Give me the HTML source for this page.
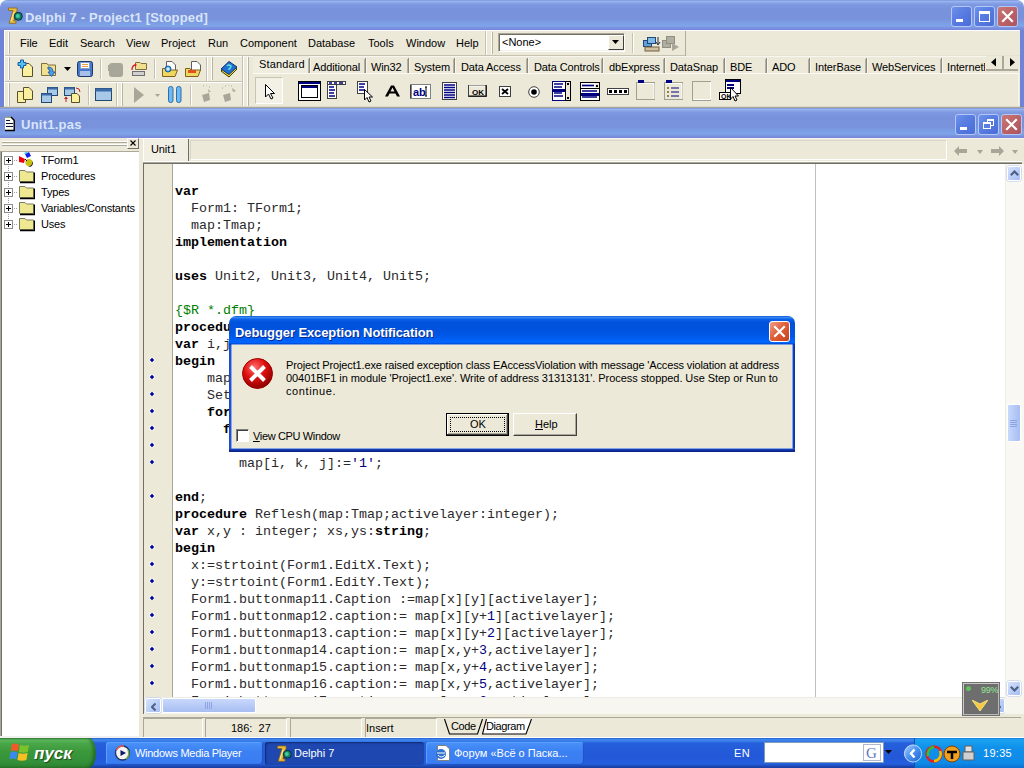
<!DOCTYPE html><html><head><meta charset="utf-8"><style>
*{box-sizing:border-box}
body{margin:0;width:1024px;height:768px;overflow:hidden;position:relative;background:#ECE9D8;font-family:"Liberation Sans",sans-serif;font-size:11px;color:#000}
.a{position:absolute}
.t{position:absolute;white-space:pre;line-height:13px}
.code{position:absolute;white-space:pre;font-family:"Liberation Mono",monospace;font-size:13.33px;line-height:17px;color:#2A2A2A}
.code b{font-weight:bold;color:#000}
.n{color:#000080}
.g{color:#008000}
</style></head><body>
<div style="position:absolute;left:0px;top:0px;width:1024px;height:8px;background:#fff"></div>
<div style="position:absolute;left:0px;top:0px;width:1024px;height:30px;background:linear-gradient(to bottom,#6F8ACB 0px,#9CB6F3 1px,#95B0EF 2px,#86A2E6 3px,#7D98E0 5px,#7893DC 9px,#7893DC 19px,#7B9BE3 22px,#7EA5E8 26px,#7B90DF 28px,#7684DA 30px);border-radius:7px 7px 0 0"></div>
<div style="position:absolute;left:0px;top:30px;width:4px;height:78px;background:#6F84D8"></div>
<div style="position:absolute;left:1020px;top:30px;width:4px;height:78px;background:#6F84D8"></div>
<div style="position:absolute;left:25px;top:10px;white-space:pre;font-weight:bold;font-size:13px;line-height:16px;color:#D8E4F8;letter-spacing:0.18px">Delphi 7 - Project1 [Stopped]</div>
<div style="position:absolute;left:951px;top:6px;width:21px;height:21px;border:1px solid #B4C8F8;border-radius:3px;background:linear-gradient(135deg,#6E92EA 0%,#5A7EE2 40%,#4A6CD8 100%);"><div class="a" style="left:4px;top:12px;width:7px;height:3px;background:#fff"></div></div>
<div style="position:absolute;left:974px;top:6px;width:21px;height:21px;border:1px solid #B4C8F8;border-radius:3px;background:linear-gradient(135deg,#6E92EA 0%,#5A7EE2 40%,#4A6CD8 100%);"><div class="a" style="left:4px;top:4px;width:11px;height:11px;border:1px solid #fff;border-top-width:3px"></div></div>
<div style="position:absolute;left:997px;top:6px;width:21px;height:21px;border:1px solid #B4C8F8;border-radius:3px;background:linear-gradient(135deg,#C87878 0%,#BC6266 50%,#AC5460 100%);"><svg class="a" style="left:0;top:0" width="19" height="19" viewBox="0 0 19 19"><path d="M5 5 L14 14 M14 5 L5 14" stroke="#fff" stroke-width="2.2" stroke-linecap="square"/></svg></div>
<svg class="a" style="left:8px;top:7px" width="16" height="17" viewBox="0 0 16 17"><path d="M0.5 1 H9 V3.5 L5.8 14 H8 V16.3 H1.2 L5 3.5 H0.5 Z" fill="#E8C040" stroke="#906010" stroke-width="0.8"/><path d="M3 14 L6 5" stroke="#F8E8A0" stroke-width="1"/><circle cx="10.3" cy="9.3" r="4" fill="#148060" stroke="#0A2850" stroke-width="1"/><circle cx="9.8" cy="9" r="2" fill="#40C8A0"/></svg>
<div style="position:absolute;left:4px;top:30px;width:1016px;height:77px;background:#ECE9D8"></div>
<div style="position:absolute;left:4px;top:30px;width:1016px;height:1px;background:#FFFFFF"></div>
<div style="position:absolute;left:4px;top:55px;width:239px;height:1px;background:#C5C2B2"></div>
<div style="position:absolute;left:4px;top:56px;width:239px;height:1px;background:#FFFFFF"></div>
<div style="position:absolute;left:4px;top:81px;width:239px;height:1px;background:#C5C2B2"></div>
<div style="position:absolute;left:4px;top:82px;width:239px;height:1px;background:#FFFFFF"></div>
<div style="position:absolute;left:4px;top:106px;width:1016px;height:1px;background:#DCD9CC"></div>
<div style="position:absolute;left:243px;top:55px;width:443px;height:1px;background:#C5C2B2"></div>
<div style="position:absolute;left:686px;top:55px;width:334px;height:1px;background:#E6E3D4"></div>
<div style="position:absolute;left:243px;top:56px;width:777px;height:1px;background:#F7F6F0"></div>
<div style="position:absolute;left:242px;top:56px;width:1px;height:50px;background:#C5C2B2"></div><div style="position:absolute;left:243px;top:56px;width:1px;height:50px;background:#FFFFFF"></div>
<div style="position:absolute;left:206px;top:57px;width:1px;height:24px;background:#C5C2B2"></div><div style="position:absolute;left:207px;top:57px;width:1px;height:24px;background:#FFFFFF"></div>
<div style="position:absolute;left:116px;top:83px;width:1px;height:23px;background:#C5C2B2"></div><div style="position:absolute;left:117px;top:83px;width:1px;height:23px;background:#FFFFFF"></div>
<div style="position:absolute;left:485px;top:31px;width:1px;height:24px;background:#C5C2B2"></div><div style="position:absolute;left:486px;top:31px;width:1px;height:24px;background:#FFFFFF"></div>
<div style="position:absolute;left:685px;top:31px;width:1px;height:25px;background:#B0AD9E"></div>
<div style="position:absolute;left:8px;top:32px;width:1px;height:22px;background:#FFFFFF"></div><div style="position:absolute;left:9px;top:32px;width:1px;height:22px;background:#B8B4A2"></div>
<div style="position:absolute;left:8px;top:57px;width:1px;height:23px;background:#FFFFFF"></div><div style="position:absolute;left:9px;top:57px;width:1px;height:23px;background:#B8B4A2"></div>
<div style="position:absolute;left:8px;top:83px;width:1px;height:23px;background:#FFFFFF"></div><div style="position:absolute;left:9px;top:83px;width:1px;height:23px;background:#B8B4A2"></div>
<div style="position:absolute;left:211px;top:57px;width:1px;height:23px;background:#FFFFFF"></div><div style="position:absolute;left:212px;top:57px;width:1px;height:23px;background:#B8B4A2"></div>
<div style="position:absolute;left:121px;top:83px;width:1px;height:23px;background:#FFFFFF"></div><div style="position:absolute;left:122px;top:83px;width:1px;height:23px;background:#B8B4A2"></div>
<div style="position:absolute;left:247px;top:57px;width:1px;height:49px;background:#FFFFFF"></div><div style="position:absolute;left:248px;top:57px;width:1px;height:49px;background:#B8B4A2"></div>
<div style="position:absolute;left:491px;top:32px;width:1px;height:22px;background:#FFFFFF"></div><div style="position:absolute;left:492px;top:32px;width:1px;height:22px;background:#B8B4A2"></div>
<div style="position:absolute;left:4px;top:31px;width:1px;height:75px;background:#FFFFFF"></div>
<div class="t" style="left:20px;top:37px">File</div>
<div class="t" style="left:49px;top:37px">Edit</div>
<div class="t" style="left:80px;top:37px">Search</div>
<div class="t" style="left:126px;top:37px">View</div>
<div class="t" style="left:161px;top:37px">Project</div>
<div class="t" style="left:208px;top:37px">Run</div>
<div class="t" style="left:240px;top:37px">Component</div>
<div class="t" style="left:308px;top:37px">Database</div>
<div class="t" style="left:368px;top:37px">Tools</div>
<div class="t" style="left:406px;top:37px">Window</div>
<div class="t" style="left:456px;top:37px">Help</div>
<div style="position:absolute;left:498px;top:33px;width:127px;height:19px;background:#fff;border:1px solid;border-color:#ACA899 #FFFFFF #FFFFFF #ACA899;box-shadow:inset 1px 1px 0 #716F64,inset -1px -1px 0 #F1EFE2"></div>
<div class="t" style="left:502px;top:36px">&lt;None&gt;</div>
<div style="position:absolute;left:608px;top:35px;width:16px;height:15px;background:#ECE9D8;border:1px solid;border-color:#fff #404040 #404040 #fff"></div>
<svg class="a" style="left:612px;top:40px" width="8" height="5"><path d="M0 0H7L3.5 4Z" fill="#000"/></svg>
<div style="position:absolute;left:632px;top:33px;width:1px;height:20px;background:#C5C2B2"></div><div style="position:absolute;left:633px;top:33px;width:1px;height:20px;background:#FFFFFF"></div>
<svg class="a" style="left:17px;top:59px" width="17" height="18" viewBox="0 0 17 18"><path d="M5.5 4.5H12L15.5 8V17.5H5.5Z" fill="#FAF0A0" stroke="#5A5028"/><path d="M3.5 1H6.5V3.5H9V6.5H6.5V9H3.5V6.5H1V3.5H3.5Z" fill="#58C0F0" stroke="#1060A8"/></svg>
<svg class="a" style="left:41px;top:61px" width="17" height="17" viewBox="0 0 17 17"><path d="M0.5 2.5H6L7 4H14.5V14.5H0.5Z" fill="#F0E090" stroke="#807040"/><path d="M7 6 Q12 6 12 11 L14 11 L10.5 15.5 L7 11 L9 11 Q9 8 7 8Z" fill="#50A0E8" stroke="#2060B0"/></svg>
<svg class="a" style="left:64px;top:67px" width="7" height="4" viewBox="0 0 7 4"><path d="M0 0H7L3.5 4Z" fill="#000"/></svg>
<svg class="a" style="left:77px;top:61px" width="16" height="16" viewBox="0 0 16 16"><rect x="0.5" y="0.5" width="15" height="15" rx="2" fill="#4878C8" stroke="#183870"/><rect x="3.5" y="1.5" width="9" height="6" fill="#FFFFFF" stroke="#80A0D0"/><path d="M5 3.5H11M5 5.5H11" stroke="#E8A040"/><rect x="3" y="10" width="10" height="5" fill="#A8C0E8"/></svg>
<svg class="a" style="left:108px;top:61px" width="16" height="16" viewBox="0 0 16 16"><rect x="1" y="2" width="14" height="14" rx="3" fill="#A8A698"/><rect x="0" y="4" width="3" height="6" fill="#A8A698"/></svg>
<svg class="a" style="left:131px;top:61px" width="17" height="16" viewBox="0 0 17 16"><path d="M4.5 1.5H9L10 2.5H15.5V8.5H4.5Z" fill="#F0E090" stroke="#807040"/><rect x="1.5" y="10.5" width="12" height="4" fill="#D0D0D0" stroke="#707070"/><path d="M1 9 Q1 4 5 4" stroke="#D02020" fill="none" stroke-width="1.3"/><path d="M4 2.5L6 4L4 5.5Z" fill="#D02020"/></svg>
<div style="position:absolute;left:154px;top:59px;width:1px;height:20px;background:#C5C2B2"></div><div style="position:absolute;left:155px;top:59px;width:1px;height:20px;background:#FFFFFF"></div>
<div style="position:absolute;left:100px;top:59px;width:1px;height:20px;background:#C5C2B2"></div><div style="position:absolute;left:101px;top:59px;width:1px;height:20px;background:#FFFFFF"></div>
<svg class="a" style="left:162px;top:61px" width="17" height="17" viewBox="0 0 17 17"><path d="M4.5 0.5H10L13.5 4V9.5H4.5Z" fill="#fff" stroke="#606060"/><path d="M0.5 7.5H5L6 9H15.5L13 15.5H0.5Z" fill="#F0D860" stroke="#806020"/><circle cx="6" cy="8" r="3" fill="#3898E0" stroke="#1860A0"/><path d="M6 6V10M4 8H8" stroke="#fff"/></svg>
<svg class="a" style="left:185px;top:61px" width="17" height="17" viewBox="0 0 17 17"><path d="M6.5 0.5H12L15.5 4V9.5H6.5Z" fill="#fff" stroke="#606060"/><path d="M0.5 7.5H5L6 9H15.5L13 15.5H0.5Z" fill="#F0D860" stroke="#806020"/><rect x="3" y="9" width="8" height="3" fill="#E05020"/></svg>
<svg class="a" style="left:220px;top:61px" width="18" height="17" viewBox="0 0 18 17"><path d="M1 10 L9 2 L17 8 L9 16Z" fill="#F0D020" stroke="#404000"/><path d="M1 8 L9 0.5 L17 6 L9 13.5Z" fill="#2070D0" stroke="#103070"/><path d="M7 5 Q9 3 11 5 Q11 7 9 8 L9 9" stroke="#60E0E0" fill="none" stroke-width="1.5"/></svg>
<svg class="a" style="left:17px;top:87px" width="17" height="16" viewBox="0 0 17 16"><path d="M0.5 4.5H6L8.5 7V15.5H0.5Z" fill="#FAF0A0" stroke="#5A5028"/><path d="M6.5 0.5H12L15.5 4V12.5H6.5Z" fill="#FAF0A0" stroke="#5A5028"/></svg>
<svg class="a" style="left:41px;top:87px" width="17" height="16" viewBox="0 0 17 16"><rect x="6.5" y="0.5" width="10" height="8" fill="#A8C8E8" stroke="#204870"/><rect x="6.5" y="0.5" width="10" height="2" fill="#3A6AA8"/><rect x="0.5" y="6.5" width="10" height="9" fill="#A8C8E8" stroke="#204870"/><rect x="0.5" y="6.5" width="10" height="2" fill="#3A6AA8"/></svg>
<svg class="a" style="left:64px;top:87px" width="17" height="17" viewBox="0 0 17 17"><rect x="0.5" y="0.5" width="10" height="8" fill="#A8C8E8" stroke="#204870"/><rect x="0.5" y="0.5" width="10" height="2" fill="#3A6AA8"/><path d="M7.5 6.5H13L15.5 9V15.5H7.5Z" fill="#FAF0A0" stroke="#5A5028"/><path d="M12 1 Q16 1 16 5" stroke="#C02020" fill="none"/><path d="M2 10 V15" stroke="#C02020"/><path d="M0 12L2 9.5L4 12Z" fill="#C02020"/></svg>
<div style="position:absolute;left:88px;top:85px;width:1px;height:20px;background:#C5C2B2"></div><div style="position:absolute;left:89px;top:85px;width:1px;height:20px;background:#FFFFFF"></div>
<svg class="a" style="left:95px;top:88px" width="17" height="13" viewBox="0 0 17 13"><rect x="0.5" y="0.5" width="16" height="12" fill="#A8C8E8" stroke="#204870"/><rect x="0.5" y="0.5" width="16" height="3" fill="#3A6AA8"/></svg>
<svg class="a" style="left:134px;top:87px" width="11" height="17" viewBox="0 0 11 17"><path d="M0 0 L10 8 L0 16Z" fill="#A8A698"/></svg>
<svg class="a" style="left:155px;top:94px" width="5" height="3" viewBox="0 0 5 3"><path d="M0 0H5L2.5 3Z" fill="#A8A698"/></svg>
<svg class="a" style="left:168px;top:86px" width="14" height="17" viewBox="0 0 14 17"><rect x="0.5" y="0.5" width="4.5" height="16" rx="2" fill="#70B8F0" stroke="#2870B0"/><rect x="8.5" y="0.5" width="4.5" height="16" rx="2" fill="#70B8F0" stroke="#2870B0"/></svg>
<div style="position:absolute;left:190px;top:85px;width:1px;height:20px;background:#C5C2B2"></div><div style="position:absolute;left:191px;top:85px;width:1px;height:20px;background:#FFFFFF"></div>
<svg class="a" style="left:201px;top:85px" width="12" height="18" viewBox="0 0 12 18"><path d="M2 1h1M5 0h1M8 2h1" stroke="#A8A698"/><path d="M7 4 L10 7 L8 7 L8 9Z" fill="#A8A698"/><path d="M1 10 L8 8 L9 15 L3 17Z" fill="#A8A698"/></svg>
<svg class="a" style="left:220px;top:85px" width="17" height="18" viewBox="0 0 17 18"><path d="M2 3h1M5 1h1M8 0h1M11 1h1" stroke="#A8A698"/><path d="M12 3 L16 6 L13 7Z" fill="#A8A698"/><path d="M3 10 L10 8 L11 15 L5 17Z" fill="#A8A698"/></svg>
<svg class="a" style="left:643px;top:35px" width="18" height="17" viewBox="0 0 18 17"><rect x="0.5" y="5.5" width="8" height="6" fill="#60A0D8" stroke="#204870"/><rect x="4.5" y="2.5" width="8" height="6" fill="#80B8E8" stroke="#204870"/><rect x="2" y="12" width="14" height="4" fill="#D0C0A0" stroke="#706040"/><path d="M15 2V9M13 7L15 10L17 7" stroke="#203040" fill="none"/></svg>
<svg class="a" style="left:662px;top:35px" width="18" height="17" viewBox="0 0 18 17"><rect x="0.5" y="5.5" width="8" height="7" fill="#B0AEA0" stroke="#908E80"/><rect x="4.5" y="1.5" width="8" height="7" fill="#B0AEA0" stroke="#908E80"/><path d="M10 8 L17 12 L10 16Z" fill="#A8A698"/></svg>
<div style="position:absolute;left:253px;top:56px;width:56px;height:17px;background:#EFEDE0"></div>
<div style="position:absolute;left:250px;top:56px;width:735px;height:18px;overflow:hidden"><div class="t" style="left:9px;top:2px;letter-spacing:0.15px">Standard</div><div class="t" style="left:63px;top:5px;letter-spacing:-0.12px">Additional</div><div class="t" style="left:121px;top:5px;letter-spacing:-0.12px">Win32</div><div class="t" style="left:164px;top:5px;letter-spacing:-0.12px">System</div><div class="t" style="left:211px;top:5px;letter-spacing:-0.12px">Data Access</div><div class="t" style="left:284px;top:5px;letter-spacing:-0.12px">Data Controls</div><div class="t" style="left:359px;top:5px;letter-spacing:-0.12px">dbExpress</div><div class="t" style="left:420px;top:5px;letter-spacing:-0.12px">DataSnap</div><div class="t" style="left:480px;top:5px;letter-spacing:-0.12px">BDE</div><div class="t" style="left:522px;top:5px;letter-spacing:-0.12px">ADO</div><div class="t" style="left:565px;top:5px;letter-spacing:-0.12px">InterBase</div><div class="t" style="left:622px;top:5px;letter-spacing:-0.12px">WebServices</div><div class="t" style="left:697px;top:5px;letter-spacing:-0.12px">InternetExpress</div></div>
<div style="position:absolute;left:308px;top:59px;width:1px;height:14px;background:#B4B1A4"></div><div style="position:absolute;left:309px;top:58px;width:1px;height:15px;background:#8E8B7E"></div><div style="position:absolute;left:310px;top:58px;width:1px;height:15px;background:#F6F5EE"></div>
<div style="position:absolute;left:364px;top:59px;width:1px;height:14px;background:#B4B1A4"></div><div style="position:absolute;left:365px;top:58px;width:1px;height:15px;background:#8E8B7E"></div><div style="position:absolute;left:366px;top:58px;width:1px;height:15px;background:#F6F5EE"></div>
<div style="position:absolute;left:407px;top:59px;width:1px;height:14px;background:#B4B1A4"></div><div style="position:absolute;left:408px;top:58px;width:1px;height:15px;background:#8E8B7E"></div><div style="position:absolute;left:409px;top:58px;width:1px;height:15px;background:#F6F5EE"></div>
<div style="position:absolute;left:453px;top:59px;width:1px;height:14px;background:#B4B1A4"></div><div style="position:absolute;left:454px;top:58px;width:1px;height:15px;background:#8E8B7E"></div><div style="position:absolute;left:455px;top:58px;width:1px;height:15px;background:#F6F5EE"></div>
<div style="position:absolute;left:526px;top:59px;width:1px;height:14px;background:#B4B1A4"></div><div style="position:absolute;left:527px;top:58px;width:1px;height:15px;background:#8E8B7E"></div><div style="position:absolute;left:528px;top:58px;width:1px;height:15px;background:#F6F5EE"></div>
<div style="position:absolute;left:601px;top:59px;width:1px;height:14px;background:#B4B1A4"></div><div style="position:absolute;left:602px;top:58px;width:1px;height:15px;background:#8E8B7E"></div><div style="position:absolute;left:603px;top:58px;width:1px;height:15px;background:#F6F5EE"></div>
<div style="position:absolute;left:663px;top:59px;width:1px;height:14px;background:#B4B1A4"></div><div style="position:absolute;left:664px;top:58px;width:1px;height:15px;background:#8E8B7E"></div><div style="position:absolute;left:665px;top:58px;width:1px;height:15px;background:#F6F5EE"></div>
<div style="position:absolute;left:723px;top:59px;width:1px;height:14px;background:#B4B1A4"></div><div style="position:absolute;left:724px;top:58px;width:1px;height:15px;background:#8E8B7E"></div><div style="position:absolute;left:725px;top:58px;width:1px;height:15px;background:#F6F5EE"></div>
<div style="position:absolute;left:765px;top:59px;width:1px;height:14px;background:#B4B1A4"></div><div style="position:absolute;left:766px;top:58px;width:1px;height:15px;background:#8E8B7E"></div><div style="position:absolute;left:767px;top:58px;width:1px;height:15px;background:#F6F5EE"></div>
<div style="position:absolute;left:808px;top:59px;width:1px;height:14px;background:#B4B1A4"></div><div style="position:absolute;left:809px;top:58px;width:1px;height:15px;background:#8E8B7E"></div><div style="position:absolute;left:810px;top:58px;width:1px;height:15px;background:#F6F5EE"></div>
<div style="position:absolute;left:865px;top:59px;width:1px;height:14px;background:#B4B1A4"></div><div style="position:absolute;left:866px;top:58px;width:1px;height:15px;background:#8E8B7E"></div><div style="position:absolute;left:867px;top:58px;width:1px;height:15px;background:#F6F5EE"></div>
<div style="position:absolute;left:940px;top:59px;width:1px;height:14px;background:#B4B1A4"></div><div style="position:absolute;left:941px;top:58px;width:1px;height:15px;background:#8E8B7E"></div><div style="position:absolute;left:942px;top:58px;width:1px;height:15px;background:#F6F5EE"></div>
<div style="position:absolute;left:986px;top:56px;width:34px;height:17px;background:#ECE9D8"></div>
<div style="position:absolute;left:986px;top:69px;width:32px;height:2px;background:#ACA899"></div>
<div style="position:absolute;left:1002px;top:56px;width:2px;height:15px;background:#ACA899"></div>
<svg class="a" style="left:991px;top:58px" width="5" height="9" viewBox="0 0 5 9"><path d="M5 0V8.5L0 4.25Z" fill="#000"/></svg>
<svg class="a" style="left:1010px;top:58px" width="5" height="9" viewBox="0 0 5 9"><path d="M0 0V8.5L5 4.25Z" fill="#000"/></svg>
<div style="position:absolute;left:253px;top:73px;width:765px;height:1px;background:#FAF9F3"></div>
<div style="position:absolute;left:1018px;top:73px;width:1px;height:33px;background:#F7F6EE"></div>
<div style="position:absolute;left:255px;top:77px;width:28px;height:27px;background:#F3F1E6;border:1px solid;border-color:#C8C4B4 #FFFFFF #FFFFFF #C8C4B4"></div>
<svg class="a" style="left:265px;top:84px" width="10" height="16" viewBox="0 0 10 16"><path d="M0.5 0.5V13L3.5 10L6 15L8 14L5.5 9.5H9.5Z" fill="#fff" stroke="#000"/></svg>
<svg class="a" style="left:298px;top:81px" width="23" height="20" viewBox="0 0 23 20"><rect x="0.5" y="0.5" width="22" height="19" fill="#fff" stroke="#000"/><rect x="1" y="1" width="21" height="2" fill="#000080"/><rect x="3.5" y="4.5" width="16" height="12" fill="#fff" stroke="#000"/><rect x="4" y="5" width="15" height="2" fill="#000080"/></svg>
<svg class="a" style="left:327px;top:81px" width="19" height="18" viewBox="0 0 19 18"><rect x="0.5" y="0.5" width="18" height="3" fill="#fff" stroke="#404040"/><path d="M2 2H5M7 2H10M12 2H16" stroke="#000080" stroke-width="1.6"/><rect x="0.5" y="3.5" width="9" height="14" fill="#fff" stroke="#404040"/><path d="M2 6H7M2 9H8M2 12H7M2 15H8" stroke="#000080" stroke-width="1.6"/></svg>
<svg class="a" style="left:357px;top:81px" width="17" height="22" viewBox="0 0 17 22"><rect x="0.5" y="0.5" width="10" height="12" fill="#fff" stroke="#404040"/><path d="M2 3H8M2 6H7M2 9H8" stroke="#000080" stroke-width="1.6"/><path d="M7.5 8.5V19L10 16.5L12 21L14 20L12 16H15.5Z" fill="#fff" stroke="#000"/></svg>
<svg class="a" style="left:385px;top:85px" width="16" height="12" viewBox="0 0 16 12"><path d="M0 11.5 L6 0.5 H9 L15 11.5 H12 L10.5 8.5 H4.5 L3 11.5Z M5.5 6.5H9.5L7.5 2.5Z" fill="#000" fill-rule="evenodd"/></svg>
<svg class="a" style="left:410px;top:84px" width="21" height="15" viewBox="0 0 21 15"><rect x="0.5" y="0.5" width="20" height="14" fill="#fff" stroke="#808080"/><path d="M1 1V14" stroke="#000"/><text x="3" y="11.5" font-family="Liberation Sans" font-weight="bold" font-size="11" fill="#000080">ab</text><path d="M16 3V12M15 3H17M15 12H17" stroke="#000"/></svg>
<svg class="a" style="left:442px;top:82px" width="15" height="18" viewBox="0 0 15 18"><rect x="0.5" y="0.5" width="14" height="17" fill="#fff" stroke="#404040"/><path d="M2 3H13M2 5.5H13M2 8H13M2 10.5H13M2 13H13M2 15.5H13" stroke="#000080" stroke-width="1.5"/></svg>
<svg class="a" style="left:468px;top:85px" width="19" height="12" viewBox="0 0 19 12"><rect x="0.5" y="0.5" width="18" height="11" fill="#ECE9D8" stroke="#404040"/><path d="M1 11H18V1" stroke="#000" fill="none"/><path d="M1 1H17" stroke="#fff"/><text x="4" y="9.5" font-family="Liberation Sans" font-weight="bold" font-size="8" fill="#000">OK</text></svg>
<svg class="a" style="left:499px;top:86px" width="12" height="11" viewBox="0 0 12 11"><rect x="0.5" y="0.5" width="11" height="10" fill="#fff" stroke="#404040"/><path d="M3 3L9 8M9 3L3 8" stroke="#000" stroke-width="1.8"/></svg>
<svg class="a" style="left:528px;top:86px" width="12" height="12" viewBox="0 0 12 12"><circle cx="6" cy="6" r="5.3" fill="#fff" stroke="#404040"/><circle cx="6" cy="6" r="2.8" fill="#000"/></svg>
<svg class="a" style="left:552px;top:81px" width="19" height="20" viewBox="0 0 19 20"><rect x="0.5" y="0.5" width="18" height="19" fill="#fff" stroke="#000080"/><path d="M2 3H11M2 6H10M2 9H11M2 12H10M2 15H11" stroke="#000080" stroke-width="1.6"/><rect x="1" y="8" width="12" height="3" fill="#000080"/><rect x="13.5" y="0.5" width="5" height="19" fill="#ECE9D8" stroke="#000"/><rect x="15" y="2" width="2" height="2" fill="#000"/><rect x="15" y="16" width="2" height="2" fill="#000"/></svg>
<svg class="a" style="left:580px;top:82px" width="20" height="19" viewBox="0 0 20 19"><rect x="0.5" y="0.5" width="19" height="6" fill="#fff" stroke="#000"/><path d="M2 3.5H14" stroke="#000080" stroke-width="1.7"/><rect x="15" y="1" width="4" height="5" fill="#ECE9D8"/><rect x="16" y="3" width="2" height="2" fill="#000"/><rect x="0.5" y="6.5" width="19" height="12" fill="#fff" stroke="#000"/><path d="M2 9H17M2 12H17M2 15H17" stroke="#000080" stroke-width="1.6"/><rect x="1" y="11" width="18" height="3" fill="#000080"/></svg>
<svg class="a" style="left:607px;top:88px" width="22" height="7" viewBox="0 0 22 7"><rect x="0.5" y="0.5" width="21" height="6" fill="#fff" stroke="#404040"/><rect x="2" y="2" width="3" height="3" fill="#000"/><rect x="7" y="2" width="3" height="3" fill="#000"/><rect x="12" y="2" width="3" height="3" fill="#000"/><rect x="17" y="2" width="3" height="3" fill="#000"/></svg>
<svg class="a" style="left:636px;top:80px" width="19" height="20" viewBox="0 0 19 20"><rect x="0.5" y="2.5" width="18" height="17" fill="none" stroke="#A0A090"/><path d="M1.5 3.5H18V19" stroke="#fff" fill="none"/><rect x="2" y="0" width="6" height="3" fill="#000080"/></svg>
<svg class="a" style="left:664px;top:80px" width="19" height="20" viewBox="0 0 19 20"><rect x="0.5" y="2.5" width="18" height="17" fill="none" stroke="#A0A090"/><path d="M1.5 3.5H18V19" stroke="#fff" fill="none"/><rect x="2" y="0" width="6" height="3" fill="#000080"/><circle cx="4" cy="8" r="1" fill="#806000"/><circle cx="4" cy="12" r="1" fill="#806000"/><circle cx="4" cy="16" r="1" fill="#806000"/><path d="M7 8H15M7 12H15M7 16H15" stroke="#000080"/></svg>
<svg class="a" style="left:692px;top:81px" width="19" height="20" viewBox="0 0 19 20"><rect x="0.5" y="0.5" width="18" height="19" fill="none" stroke="#A0A090"/><path d="M1.5 18.5H18.5V1" stroke="#fff" fill="none"/></svg>
<svg class="a" style="left:719px;top:79px" width="22" height="24" viewBox="0 0 22 24"><rect x="6.5" y="0.5" width="15" height="14" fill="#fff" stroke="#000"/><rect x="7" y="1" width="14" height="2" fill="#000080"/><rect x="8" y="5" width="7" height="2" fill="#000080"/><rect x="8" y="8" width="7" height="2" fill="#000080"/><rect x="0.5" y="13.5" width="11" height="7" fill="#fff" stroke="#000"/><text x="2" y="20" font-family="Liberation Sans" font-weight="bold" font-size="7" fill="#000">OK</text><path d="M11.5 8.5V20L14 17.5L16 22L18 21L16 17H19.5Z" fill="#fff" stroke="#000"/></svg>
<div style="position:absolute;left:0px;top:107px;width:1024px;height:1px;background:#A8A698"></div>
<div style="position:absolute;left:0px;top:108px;width:1024px;height:30px;background:linear-gradient(to bottom,#6F8ACB 0px,#9CB6F3 1px,#95B0EF 2px,#86A2E6 3px,#7D98E0 5px,#7893DC 9px,#7893DC 19px,#7B9BE3 22px,#7EA5E8 26px,#7B90DF 28px,#7684DA 30px)"></div>
<svg class="a" style="left:4px;top:116px" width="12" height="16" viewBox="0 0 12 16"><path d="M1 1.5H7L10 4.5V14H1Z" fill="#FAFCF0"/><path d="M1 1.3H7" stroke="#90A060"/><path d="M7 1 L10.2 4.2 V14.5 H1" stroke="#000" stroke-width="1.4" fill="none"/><path d="M2 4.5H6M2 7.5H9M2 10.5H9" stroke="#101040" stroke-width="1.2"/></svg>
<div style="position:absolute;left:21px;top:117px;white-space:pre;font-weight:bold;font-size:13px;line-height:16px;color:#D8E4F8;letter-spacing:0.25px">Unit1.pas</div>
<div style="position:absolute;left:955px;top:114px;width:21px;height:21px;border:1px solid #B4C8F8;border-radius:3px;background:linear-gradient(135deg,#6E92EA 0%,#5A7EE2 40%,#4A6CD8 100%);"><div class="a" style="left:4px;top:12px;width:7px;height:3px;background:#fff"></div></div>
<div style="position:absolute;left:978px;top:114px;width:21px;height:21px;border:1px solid #B4C8F8;border-radius:3px;background:linear-gradient(135deg,#6E92EA 0%,#5A7EE2 40%,#4A6CD8 100%);"><div class="a" style="left:8px;top:4px;width:7px;height:7px;border:1px solid #fff;border-top-width:2px"></div><div class="a" style="left:4px;top:7px;width:8px;height:7px;border:1px solid #fff;border-top-width:2px;background:#5A7EE2"></div></div>
<div style="position:absolute;left:1001px;top:114px;width:21px;height:21px;border:1px solid #B4C8F8;border-radius:3px;background:linear-gradient(135deg,#C87878 0%,#BC6266 50%,#AC5460 100%);"><svg class="a" style="left:0;top:0" width="19" height="19" viewBox="0 0 19 19"><path d="M5 5 L14 14 M14 5 L5 14" stroke="#fff" stroke-width="2.2" stroke-linecap="square"/></svg></div>
<div style="position:absolute;left:0px;top:138px;width:1024px;height:600px;background:#ECE9D8"></div>
<div style="position:absolute;left:0px;top:138px;width:1024px;height:1px;background:#F4F6EE"></div>
<div style="position:absolute;left:0px;top:138px;width:139px;height:13px;background:#ECE9D8"></div>
<div style="position:absolute;left:2px;top:141px;width:125px;height:1px;background:#FFFFFF"></div><div style="position:absolute;left:2px;top:142px;width:125px;height:1px;background:#ACA899"></div>
<div style="position:absolute;left:2px;top:144px;width:125px;height:1px;background:#FFFFFF"></div><div style="position:absolute;left:2px;top:145px;width:125px;height:1px;background:#ACA899"></div>
<div style="position:absolute;left:127px;top:138px;width:12px;height:11px;background:#ECE9D8;border:1px solid;border-color:#fff #716F64 #716F64 #fff"></div>
<svg class="a" style="left:130px;top:140px" width="6" height="6" viewBox="0 0 6 6"><path d="M0.5 0.5L5.5 5.5M5.5 0.5L0.5 5.5" stroke="#000" stroke-width="1.1"/></svg>
<div style="position:absolute;left:0px;top:151px;width:139px;height:586px;background:#fff;border-left:1px solid #ACA899;border-top:1px solid #ACA899;box-shadow:inset 1px 0 0 #716F64"></div>
<div style="position:absolute;left:4px;top:156px;width:9px;height:9px;background:#fff;border:1px solid #8C8C8C"></div>
<div style="position:absolute;left:6px;top:160px;width:5px;height:1px;background:#000"></div><div style="position:absolute;left:8px;top:158px;width:1px;height:5px;background:#000"></div>
<div style="position:absolute;left:14px;top:160px;width:4px;height:1px;background-image:linear-gradient(to right,#A0A0A0 50%,transparent 50%);background-size:2px 1px"></div>
<div style="position:absolute;left:8px;top:166px;width:1px;height:6px;background-image:linear-gradient(to bottom,#A0A0A0 50%,transparent 50%);background-size:1px 2px"></div>
<svg class="a" style="left:19px;top:152px" width="16" height="16" viewBox="0 0 16 16"><path d="M0 4 L6 7 L5 11 L0 10Z" fill="#F00010"/><path d="M6 2 L10 0 L12 4 L8 6Z" fill="#1020E8"/><path d="M5.5 1.5 L8 0.5" stroke="#30D0F0" stroke-width="1.5"/><circle cx="10" cy="10.5" r="3.6" fill="#C8C010"/><path d="M13 9 Q14 13 10 14.5 L9 15 Q13.5 15.5 14 11Z" fill="#202000"/><path d="M6 7 L8 9" stroke="#000"/></svg>
<div class="t" style="left:41px;top:154px;letter-spacing:-0.2px">TForm1</div>
<div style="position:absolute;left:4px;top:172px;width:9px;height:9px;background:#fff;border:1px solid #8C8C8C"></div>
<div style="position:absolute;left:6px;top:176px;width:5px;height:1px;background:#000"></div><div style="position:absolute;left:8px;top:174px;width:1px;height:5px;background:#000"></div>
<div style="position:absolute;left:14px;top:176px;width:4px;height:1px;background-image:linear-gradient(to right,#A0A0A0 50%,transparent 50%);background-size:2px 1px"></div>
<div style="position:absolute;left:8px;top:182px;width:1px;height:6px;background-image:linear-gradient(to bottom,#A0A0A0 50%,transparent 50%);background-size:1px 2px"></div>
<svg class="a" style="left:19px;top:169px" width="16" height="15" viewBox="0 0 16 15"><path d="M0.5 1.5H6L7.5 3H14.5V12.5H0.5Z" fill="#EEE890" stroke="#7A7A60"/><path d="M1 13.5H15.5V3.5" stroke="#000" stroke-width="1.4" fill="none"/></svg>
<div class="t" style="left:41px;top:170px;letter-spacing:-0.2px">Procedures</div>
<div style="position:absolute;left:4px;top:188px;width:9px;height:9px;background:#fff;border:1px solid #8C8C8C"></div>
<div style="position:absolute;left:6px;top:192px;width:5px;height:1px;background:#000"></div><div style="position:absolute;left:8px;top:190px;width:1px;height:5px;background:#000"></div>
<div style="position:absolute;left:14px;top:192px;width:4px;height:1px;background-image:linear-gradient(to right,#A0A0A0 50%,transparent 50%);background-size:2px 1px"></div>
<div style="position:absolute;left:8px;top:198px;width:1px;height:6px;background-image:linear-gradient(to bottom,#A0A0A0 50%,transparent 50%);background-size:1px 2px"></div>
<svg class="a" style="left:19px;top:185px" width="16" height="15" viewBox="0 0 16 15"><path d="M0.5 1.5H6L7.5 3H14.5V12.5H0.5Z" fill="#EEE890" stroke="#7A7A60"/><path d="M1 13.5H15.5V3.5" stroke="#000" stroke-width="1.4" fill="none"/></svg>
<div class="t" style="left:41px;top:186px;letter-spacing:-0.2px">Types</div>
<div style="position:absolute;left:4px;top:204px;width:9px;height:9px;background:#fff;border:1px solid #8C8C8C"></div>
<div style="position:absolute;left:6px;top:208px;width:5px;height:1px;background:#000"></div><div style="position:absolute;left:8px;top:206px;width:1px;height:5px;background:#000"></div>
<div style="position:absolute;left:14px;top:208px;width:4px;height:1px;background-image:linear-gradient(to right,#A0A0A0 50%,transparent 50%);background-size:2px 1px"></div>
<div style="position:absolute;left:8px;top:214px;width:1px;height:6px;background-image:linear-gradient(to bottom,#A0A0A0 50%,transparent 50%);background-size:1px 2px"></div>
<svg class="a" style="left:19px;top:201px" width="16" height="15" viewBox="0 0 16 15"><path d="M0.5 1.5H6L7.5 3H14.5V12.5H0.5Z" fill="#EEE890" stroke="#7A7A60"/><path d="M1 13.5H15.5V3.5" stroke="#000" stroke-width="1.4" fill="none"/></svg>
<div class="t" style="left:41px;top:202px;letter-spacing:-0.2px">Variables/Constants</div>
<div style="position:absolute;left:4px;top:220px;width:9px;height:9px;background:#fff;border:1px solid #8C8C8C"></div>
<div style="position:absolute;left:6px;top:224px;width:5px;height:1px;background:#000"></div><div style="position:absolute;left:8px;top:222px;width:1px;height:5px;background:#000"></div>
<div style="position:absolute;left:14px;top:224px;width:4px;height:1px;background-image:linear-gradient(to right,#A0A0A0 50%,transparent 50%);background-size:2px 1px"></div>
<svg class="a" style="left:19px;top:217px" width="16" height="15" viewBox="0 0 16 15"><path d="M0.5 1.5H6L7.5 3H14.5V12.5H0.5Z" fill="#EEE890" stroke="#7A7A60"/><path d="M1 13.5H15.5V3.5" stroke="#000" stroke-width="1.4" fill="none"/></svg>
<div class="t" style="left:41px;top:218px;letter-spacing:-0.2px">Uses</div>
<div style="position:absolute;left:143px;top:138px;width:46px;height:23px;background:#F1EFE4;border-left:1px solid #fff;border-top:1px solid #fff"></div>
<div style="position:absolute;left:188px;top:139px;width:1px;height:22px;background:#716F64"></div>
<div class="t" style="left:151px;top:143px;letter-spacing:-0.1px">Unit1</div>
<div style="position:absolute;left:190px;top:140px;width:757px;height:20px;border:1px solid;border-color:#D8D6CA #FFFFFF #FFFFFF #D8D6CA"></div>
<svg class="a" style="left:954px;top:146px" width="14" height="10" viewBox="0 0 14 10"><path d="M0 5 L5 0 V3 H13 V7 H5 V10Z" fill="#A8A698"/></svg>
<svg class="a" style="left:977px;top:150px" width="6" height="4" viewBox="0 0 6 4"><path d="M0 0H6L3 4Z" fill="#A8A698"/></svg>
<svg class="a" style="left:990px;top:146px" width="14" height="10" viewBox="0 0 14 10"><path d="M14 5 L9 0 V3 H1 V7 H9 V10Z" fill="#A8A698"/></svg>
<svg class="a" style="left:1012px;top:150px" width="6" height="4" viewBox="0 0 6 4"><path d="M0 0H6L3 4Z" fill="#A8A698"/></svg>
<div style="position:absolute;left:143px;top:161px;width:879px;height:1px;background:#FFFFFF"></div>
<div style="position:absolute;left:143px;top:162px;width:879px;height:1px;background:#ACA899"></div>
<div style="position:absolute;left:143px;top:163px;width:1px;height:554px;background:#716F64"></div>
<div style="position:absolute;left:144px;top:163px;width:878px;height:1px;background:#716F64"></div>
<div style="position:absolute;left:144px;top:164px;width:28px;height:533px;background:#ECE9D8"></div>
<div style="position:absolute;left:172px;top:164px;width:1px;height:533px;background:#A8A69C"></div>
<div style="position:absolute;left:173px;top:164px;width:832px;height:533px;background:#fff"></div>
<div style="position:absolute;left:815px;top:164px;width:1px;height:533px;background:#C0C0C0"></div>
<div class="a" style="left:173px;top:164px;width:832px;height:533px;overflow:hidden"><div class="a" style="left:-173px;top:-164px;width:1024px;height:768px"><div class="code" style="left:175px;top:183px"><b>var</b></div><div class="code" style="left:175px;top:200px">  Form1: TForm1;</div><div class="code" style="left:175px;top:217px">  map:Tmap;</div><div class="code" style="left:175px;top:234px"><b>implementation</b></div><div class="code" style="left:175px;top:268px"><b>uses</b> Unit2, Unit3, Unit4, Unit5;</div><div class="code" style="left:175px;top:302px"><span class="g">{$R *.dfm}</span></div><div class="code" style="left:175px;top:319px"><b>procedure</b> Clear;</div><div class="code" style="left:175px;top:336px"><b>var</b> i,j,k:integer;</div><div class="code" style="left:175px;top:353px"><b>begin</b></div><div class="code" style="left:175px;top:370px">    map[i,j,k]:=0;</div><div class="code" style="left:175px;top:387px">    SetLength(map,10,10,10);</div><div class="code" style="left:175px;top:404px">    <b>for</b> i:=<span class="n">0</span> <b>to</b> <span class="n">9</span> <b>do</b></div><div class="code" style="left:175px;top:421px">      <b>for</b> j:=<span class="n">0</span> <b>to</b> <span class="n">9</span> <b>do</b></div><div class="code" style="left:175px;top:438px">        <b>for</b> k:=<span class="n">0</span> <b>to</b> <span class="n">9</span> <b>do</b></div><div class="code" style="left:175px;top:455px">        map[i, k, j]:=<span class="n">'1'</span>;</div><div class="code" style="left:175px;top:489px"><b>end</b>;</div><div class="code" style="left:175px;top:506px"><b>procedure</b> Reflesh(map:Tmap;activelayer:integer);</div><div class="code" style="left:175px;top:523px"><b>var</b> x,y : integer; xs,ys:<b>string</b>;</div><div class="code" style="left:175px;top:540px"><b>begin</b></div><div class="code" style="left:175px;top:557px">  x:=strtoint(Form1.EditX.Text);</div><div class="code" style="left:175px;top:574px">  y:=strtoint(Form1.EditY.Text);</div><div class="code" style="left:175px;top:591px">  Form1.buttonmap11.Caption :=map[x][y][activelayer];</div><div class="code" style="left:175px;top:608px">  Form1.buttonmap12.caption:= map[x][y+<span class="n">1</span>][activelayer];</div><div class="code" style="left:175px;top:625px">  Form1.buttonmap13.caption:= map[x][y+<span class="n">2</span>][activelayer];</div><div class="code" style="left:175px;top:642px">  Form1.buttonmap14.caption:= map[x,y+<span class="n">3</span>,activelayer];</div><div class="code" style="left:175px;top:659px">  Form1.buttonmap15.caption:= map[x,y+<span class="n">4</span>,activelayer];</div><div class="code" style="left:175px;top:676px">  Form1.buttonmap16.caption:= map[x,y+<span class="n">5</span>,activelayer];</div><div class="code" style="left:175px;top:693px">  Form1.buttonmap17.caption:= map[x,y+<span class="n">6</span>,activelayer];</div></div></div>
<svg class="a" style="left:149px;top:357px" width="6" height="6" viewBox="0 0 6 6"><circle cx="3" cy="3" r="2.8" fill="#F4F8FF"/><path d="M3 0.8 L5.2 3 L3 5.2 L0.8 3Z" fill="#000090"/></svg>
<svg class="a" style="left:149px;top:374px" width="6" height="6" viewBox="0 0 6 6"><circle cx="3" cy="3" r="2.8" fill="#F4F8FF"/><path d="M3 0.8 L5.2 3 L3 5.2 L0.8 3Z" fill="#000090"/></svg>
<svg class="a" style="left:149px;top:391px" width="6" height="6" viewBox="0 0 6 6"><circle cx="3" cy="3" r="2.8" fill="#F4F8FF"/><path d="M3 0.8 L5.2 3 L3 5.2 L0.8 3Z" fill="#000090"/></svg>
<svg class="a" style="left:149px;top:408px" width="6" height="6" viewBox="0 0 6 6"><circle cx="3" cy="3" r="2.8" fill="#F4F8FF"/><path d="M3 0.8 L5.2 3 L3 5.2 L0.8 3Z" fill="#000090"/></svg>
<svg class="a" style="left:149px;top:425px" width="6" height="6" viewBox="0 0 6 6"><circle cx="3" cy="3" r="2.8" fill="#F4F8FF"/><path d="M3 0.8 L5.2 3 L3 5.2 L0.8 3Z" fill="#000090"/></svg>
<svg class="a" style="left:149px;top:442px" width="6" height="6" viewBox="0 0 6 6"><circle cx="3" cy="3" r="2.8" fill="#F4F8FF"/><path d="M3 0.8 L5.2 3 L3 5.2 L0.8 3Z" fill="#000090"/></svg>
<svg class="a" style="left:149px;top:459px" width="6" height="6" viewBox="0 0 6 6"><circle cx="3" cy="3" r="2.8" fill="#F4F8FF"/><path d="M3 0.8 L5.2 3 L3 5.2 L0.8 3Z" fill="#000090"/></svg>
<svg class="a" style="left:149px;top:493px" width="6" height="6" viewBox="0 0 6 6"><circle cx="3" cy="3" r="2.8" fill="#F4F8FF"/><path d="M3 0.8 L5.2 3 L3 5.2 L0.8 3Z" fill="#000090"/></svg>
<svg class="a" style="left:149px;top:544px" width="6" height="6" viewBox="0 0 6 6"><circle cx="3" cy="3" r="2.8" fill="#F4F8FF"/><path d="M3 0.8 L5.2 3 L3 5.2 L0.8 3Z" fill="#000090"/></svg>
<svg class="a" style="left:149px;top:561px" width="6" height="6" viewBox="0 0 6 6"><circle cx="3" cy="3" r="2.8" fill="#F4F8FF"/><path d="M3 0.8 L5.2 3 L3 5.2 L0.8 3Z" fill="#000090"/></svg>
<svg class="a" style="left:149px;top:578px" width="6" height="6" viewBox="0 0 6 6"><circle cx="3" cy="3" r="2.8" fill="#F4F8FF"/><path d="M3 0.8 L5.2 3 L3 5.2 L0.8 3Z" fill="#000090"/></svg>
<svg class="a" style="left:149px;top:595px" width="6" height="6" viewBox="0 0 6 6"><circle cx="3" cy="3" r="2.8" fill="#F4F8FF"/><path d="M3 0.8 L5.2 3 L3 5.2 L0.8 3Z" fill="#000090"/></svg>
<svg class="a" style="left:149px;top:612px" width="6" height="6" viewBox="0 0 6 6"><circle cx="3" cy="3" r="2.8" fill="#F4F8FF"/><path d="M3 0.8 L5.2 3 L3 5.2 L0.8 3Z" fill="#000090"/></svg>
<svg class="a" style="left:149px;top:629px" width="6" height="6" viewBox="0 0 6 6"><circle cx="3" cy="3" r="2.8" fill="#F4F8FF"/><path d="M3 0.8 L5.2 3 L3 5.2 L0.8 3Z" fill="#000090"/></svg>
<svg class="a" style="left:149px;top:646px" width="6" height="6" viewBox="0 0 6 6"><circle cx="3" cy="3" r="2.8" fill="#F4F8FF"/><path d="M3 0.8 L5.2 3 L3 5.2 L0.8 3Z" fill="#000090"/></svg>
<svg class="a" style="left:149px;top:663px" width="6" height="6" viewBox="0 0 6 6"><circle cx="3" cy="3" r="2.8" fill="#F4F8FF"/><path d="M3 0.8 L5.2 3 L3 5.2 L0.8 3Z" fill="#000090"/></svg>
<svg class="a" style="left:149px;top:680px" width="6" height="6" viewBox="0 0 6 6"><circle cx="3" cy="3" r="2.8" fill="#F4F8FF"/><path d="M3 0.8 L5.2 3 L3 5.2 L0.8 3Z" fill="#000090"/></svg>
<div style="position:absolute;left:1005px;top:164px;width:19px;height:533px;background:#F9F8F3;border-left:1px solid #EEEDE5"></div>
<div class="a" style="left:1007px;top:166px;width:14px;height:15px;border:1px solid #fff;border-radius:2px;background:linear-gradient(135deg,#D6E2FB,#B8CCF6 60%,#A8BEF2);box-shadow:0 0 0 0.5px #B4C4E8"><svg class="a" style="left:2px;top:3px" width="9" height="6" viewBox="0 0 9 6"><path d="M0.8 5.2 L4.5 1.5 L8.2 5.2" stroke="#4D6185" stroke-width="2.2" fill="none"/></svg></div>
<div class="a" style="left:1007px;top:681px;width:14px;height:15px;border:1px solid #fff;border-radius:2px;background:linear-gradient(135deg,#D6E2FB,#B8CCF6 60%,#A8BEF2);box-shadow:0 0 0 0.5px #B4C4E8"><svg class="a" style="left:2px;top:4px" width="9" height="6" viewBox="0 0 9 6"><path d="M0.8 0.8 L4.5 4.5 L8.2 0.8" stroke="#4D6185" stroke-width="2.2" fill="none"/></svg></div>
<div class="a" style="left:1007px;top:404px;width:14px;height:38px;border:1px solid #fff;border-radius:2px;background:linear-gradient(to right,#C9D8FC,#B4C8F6 60%,#A8BEF2)"></div>
<div style="position:absolute;left:1010px;top:420px;width:7px;height:1px;background:#8CA4E0"></div><div style="position:absolute;left:1010px;top:422px;width:7px;height:1px;background:#8CA4E0"></div><div style="position:absolute;left:1010px;top:424px;width:7px;height:1px;background:#8CA4E0"></div><div style="position:absolute;left:1010px;top:426px;width:7px;height:1px;background:#8CA4E0"></div>
<div style="position:absolute;left:144px;top:697px;width:861px;height:17px;background:#F7F6F1;border-top:1px solid #EEEDE5"></div>
<div class="a" style="left:145px;top:698px;width:16px;height:15px;border:1px solid #fff;border-radius:2px;background:linear-gradient(135deg,#D6E2FB,#B8CCF6 60%,#A8BEF2);box-shadow:0 0 0 0.5px #B4C4E8"><svg class="a" style="left:5px;top:4px" width="5" height="8" viewBox="0 0 5 8"><path d="M4.5 0.5 L1 4 L4.5 7.5" stroke="#4D6185" stroke-width="2" fill="none"/></svg></div>
<div class="a" style="left:162px;top:698px;width:94px;height:15px;border:1px solid #fff;border-radius:2px;background:linear-gradient(to bottom,#C9D8FC,#B4C8F6 60%,#A8BEF2)"></div>
<div style="position:absolute;left:205px;top:702px;width:1px;height:7px;background:#8CA4E0"></div><div style="position:absolute;left:207px;top:702px;width:1px;height:7px;background:#8CA4E0"></div><div style="position:absolute;left:209px;top:702px;width:1px;height:7px;background:#8CA4E0"></div><div style="position:absolute;left:211px;top:702px;width:1px;height:7px;background:#8CA4E0"></div>
<div class="a" style="left:989px;top:698px;width:16px;height:15px;border:1px solid #fff;border-radius:2px;background:linear-gradient(135deg,#D6E2FB,#B8CCF6 60%,#A8BEF2);box-shadow:0 0 0 0.5px #B4C4E8"><svg class="a" style="left:6px;top:4px" width="5" height="8" viewBox="0 0 5 8"><path d="M0.5 0.5 L4 4 L0.5 7.5" stroke="#4D6185" stroke-width="2" fill="none"/></svg></div>
<div style="position:absolute;left:1005px;top:697px;width:19px;height:17px;background:#F6F5EE"></div>
<div style="position:absolute;left:139px;top:714px;width:885px;height:24px;background:#ECE9D8"></div>
<div style="position:absolute;left:143px;top:717px;width:878px;height:1px;background:#ACA899"></div>
<div style="position:absolute;left:143px;top:718px;width:60px;height:19px;border-left:1px solid #ACA899;border-top:1px solid #ACA899;border-right:1px solid #fff"></div><div style="position:absolute;left:205px;top:718px;width:82px;height:19px;border-left:1px solid #ACA899;border-top:1px solid #ACA899;border-right:1px solid #fff"></div><div style="position:absolute;left:290px;top:718px;width:72px;height:19px;border-left:1px solid #ACA899;border-top:1px solid #ACA899;border-right:1px solid #fff"></div><div style="position:absolute;left:365px;top:718px;width:72px;height:19px;border-left:1px solid #ACA899;border-top:1px solid #ACA899;border-right:1px solid #fff"></div>
<div class="t" style="left:231px;top:722px">186:  27</div>
<div class="t" style="left:366px;top:722px">Insert</div>
<svg class="a" style="left:440px;top:718px" width="95" height="18" viewBox="0 0 95 18"><path d="M46.5 1 L42.5 16 H86 L91.5 1" fill="#fff" stroke="#000" stroke-width="1.1"/><path d="M4.5 1 L9.5 16 H37.5 L42.5 1" fill="#ECE9D8" stroke="#000" stroke-width="1.1"/></svg>
<div class="t" style="left:451px;top:720px;letter-spacing:-0.4px">Code</div>
<div class="t" style="left:486px;top:720px;letter-spacing:-0.4px">Diagram</div>
<div style="position:absolute;left:0px;top:736px;width:139px;height:2px;background:#F0F0F0"></div>
<div style="position:absolute;left:139px;top:737px;width:885px;height:1px;background:#FFFFFF"></div>
<div style="position:absolute;left:232px;top:345px;width:560px;height:1px;background:#D8E4F4"></div>
<div style="position:absolute;left:229px;top:316px;width:566px;height:29px;background:linear-gradient(to bottom,#0041C8 0px,#3D8FF5 1px,#2C7EF2 2px,#0E62EA 3px,#0053DE 6px,#0052DC 12px,#0058E8 20px,#0064FC 25px,#0066FF 27px,#003DC0 28px,#003DC0 29px);border-radius:7px 7px 0 0"></div>
<div style="position:absolute;left:229px;top:345px;width:566px;height:107px;background:linear-gradient(to bottom,#0A3CD0 0%,#1A48D0 80%,#0A2A9A 100%)"></div>
<div style="position:absolute;left:229px;top:345px;width:3px;height:104px;background:linear-gradient(to right,#1A44C8,#2C5EE0)"></div>
<div style="position:absolute;left:792px;top:345px;width:3px;height:104px;background:linear-gradient(to left,#0A2CA0,#2050D8)"></div>
<div style="position:absolute;left:229px;top:448px;width:566px;height:4px;background:linear-gradient(to bottom,#2A58D8,#0C2E9E 60%,#06207E)"></div>
<div style="position:absolute;left:232px;top:345px;width:560px;height:103px;background:#ECE9D8;box-shadow:0 0 0 0.6px #C8DCF4"></div>
<div style="position:absolute;left:235px;top:325px;white-space:pre;font-weight:bold;font-size:13px;line-height:16px;color:#fff;letter-spacing:-0.1px;text-shadow:1px 1px 0 #0A2A90">Debugger Exception Notification</div>
<div style="position:absolute;left:769px;top:321px;width:21px;height:21px;border:1px solid #FFFFFF;border-radius:3px;background:linear-gradient(135deg,#F0A088 0%,#E0603A 45%,#C8401E 100%);"><svg class="a" style="left:0;top:0" width="19" height="19" viewBox="0 0 19 19"><path d="M5 5 L14 14 M14 5 L5 14" stroke="#fff" stroke-width="2.2" stroke-linecap="square"/></svg></div>
<svg class="a" style="left:242px;top:358px" width="32" height="32" viewBox="0 0 32 32"><defs><radialGradient id="rg" cx="40%" cy="30%" r="70%"><stop offset="0" stop-color="#FF7070"/><stop offset="0.5" stop-color="#E01010"/><stop offset="1" stop-color="#900000"/></radialGradient></defs><circle cx="15.5" cy="15.5" r="15" fill="url(#rg)" stroke="#A00000"/><path d="M8.5 8.5 L22.5 22.5 M22.5 8.5 L8.5 22.5" stroke="#fff" stroke-width="4"/></svg>
<div class="t" style="left:286px;top:359px;letter-spacing:-0.13px">Project Project1.exe raised exception class EAccessViolation with message 'Access violation at address</div>
<div class="t" style="left:286px;top:372px;letter-spacing:-0.06px">00401BF1 in module 'Project1.exe'. Write of address 31313131'. Process stopped. Use Step or Run to</div>
<div class="t" style="left:286px;top:385px;letter-spacing:0.6px">continue.</div>
<div style="position:absolute;left:236px;top:429px;width:13px;height:13px;background:#fff;border:1px solid;border-color:#808080 #fff #fff #808080;box-shadow:inset 1px 1px 0 #404040"></div>
<div class="t" style="left:253px;top:430px;letter-spacing:-0.35px"><u>V</u>iew CPU Window</div>
<div style="position:absolute;left:446px;top:413px;width:63px;height:23px;background:#ECE9D8;border:1px solid #000;box-shadow:inset -1px -1px 0 #404040,inset 1px 1px 0 #fff,inset -2px -2px 0 #ACA899"></div>
<div style="position:absolute;left:450px;top:417px;width:55px;height:15px;border:1px dotted #000"></div>
<div class="t" style="left:470px;top:418px">OK</div>
<div style="position:absolute;left:513px;top:413px;width:64px;height:23px;background:#ECE9D8;border:1px solid;border-color:#fff #404040 #404040 #fff;box-shadow:inset -1px -1px 0 #ACA899"></div>
<div class="t" style="left:535px;top:418px"><u>H</u>elp</div>
<div style="position:absolute;left:0px;top:738px;width:1024px;height:30px;background:linear-gradient(to bottom,#2050C0 0px,#3C86EC 1px,#3A80EA 3px,#2660DC 5px,#245CDA 10px,#2358D8 20px,#2460DE 26px,#1941A5 29px)"></div>
<div style="position:absolute;left:0px;top:738px;width:96px;height:30px;background:linear-gradient(to bottom,#3A8A3A 0px,#5CB85C 2px,#4AA84A 5px,#3A983A 14px,#34903A 24px,#2C802C 30px);border-radius:0 7px 7px 0/0 15px 15px 0;box-shadow:inset -3px 0 3px rgba(0,40,0,0.35)"></div>
<svg class="a" style="left:9px;top:743px" width="22" height="19" viewBox="0 0 22 19"><path d="M3 1 Q6 0 10 1.5 L8.8 8.5 Q5 7 1.8 8Z" fill="#F05A28"/><path d="M11 2 Q15 3.5 20 2 L18.8 9 Q14 10.5 9.8 9Z" fill="#7CC22A"/><path d="M1.6 9 Q5 8 8.6 9.5 L7.4 16.5 Q4 15 0.4 16Z" fill="#3A8AF0"/><path d="M9.6 10 Q14 11.5 18.6 10 L17.4 17 Q13 18.5 8.4 17Z" fill="#F8C020"/></svg>
<div style="position:absolute;left:34px;top:744px;white-space:pre;font-weight:bold;font-style:italic;font-size:17px;line-height:20px;color:#fff;text-shadow:1px 1px 1px #1A4A1A">пуск</div>
<div style="position:absolute;left:106px;top:742px;width:157px;height:23px;background:linear-gradient(to bottom,#4A92F8,#3C81F3 40%,#3A7CF2);border-radius:3px;box-shadow:inset -1px -1px 1px #2050C0,inset 1px 1px 0 #5AA0FF"></div>
<div style="position:absolute;left:265px;top:742px;width:159px;height:23px;background:#1E48B0;border-radius:3px;box-shadow:inset 1px 1px 2px #102870"></div>
<div style="position:absolute;left:426px;top:742px;width:158px;height:23px;background:linear-gradient(to bottom,#4A92F8,#3C81F3 40%,#3A7CF2);border-radius:3px;box-shadow:inset -1px -1px 1px #2050C0,inset 1px 1px 0 #5AA0FF"></div>
<svg class="a" style="left:114px;top:745px" width="17" height="16" viewBox="0 0 17 16"><circle cx="8.5" cy="8" r="7" fill="#F4F4F4" stroke="#203060" stroke-width="1.3"/><path d="M2.5 5 A7 7 0 0 1 10 1.2" stroke="#E06060" stroke-width="1.5" fill="none"/><path d="M14 5 A7 7 0 0 1 12 14" stroke="#70B040" stroke-width="1.5" fill="none"/><path d="M6.5 5 L12 8 L6.5 11Z" fill="#101860"/></svg>
<div style="position:absolute;left:135px;top:747px;white-space:pre;color:#fff;line-height:13px;letter-spacing:-0.28px">Windows Media Player</div>
<svg class="a" style="left:277px;top:745px" width="16" height="17" viewBox="0 0 16 17"><path d="M0.5 1 H9 V3.5 L5.8 14 H8 V16.3 H1.2 L5 3.5 H0.5 Z" fill="#E8C040" stroke="#906010" stroke-width="0.8"/><path d="M3 14 L6 5" stroke="#F8E8A0" stroke-width="1"/><circle cx="10.3" cy="9.3" r="4" fill="#148060" stroke="#0A2850" stroke-width="1"/><circle cx="9.8" cy="9" r="2" fill="#40C8A0"/></svg>
<div style="position:absolute;left:294px;top:747px;white-space:pre;color:#fff;line-height:13px">Delphi 7</div>
<svg class="a" style="left:434px;top:745px" width="17" height="16" viewBox="0 0 17 16"><path d="M3.5 0.5H12L15.5 4V15.5H3.5Z" fill="#fff" stroke="#808080"/><circle cx="7" cy="9" r="5" fill="#3070D0"/><path d="M3 8 H11 M4 10 Q7 14 11 10" stroke="#fff" fill="none"/></svg>
<div style="position:absolute;left:454px;top:747px;white-space:pre;color:#fff;line-height:13px">Форум «Всё о Паска...</div>
<div style="position:absolute;left:734px;top:747px;white-space:pre;color:#fff;line-height:13px;letter-spacing:0.4px">EN</div>
<div style="position:absolute;left:764px;top:742px;width:120px;height:21px;background:#fff;border:1px solid #7F9DB9"></div>
<svg class="a" style="left:863px;top:744px" width="18" height="17" viewBox="0 0 18 17"><rect x="0.5" y="0.5" width="17" height="16" fill="#fff" stroke="#B0B8D0"/><text x="3" y="14" font-family="Liberation Serif" font-size="15" fill="#5A78C8">G</text></svg>
<svg class="a" style="left:885px;top:750px" width="7" height="4" viewBox="0 0 7 4"><path d="M0 0H7L3.5 4Z" fill="#000"/></svg>
<div style="position:absolute;left:914px;top:738px;width:110px;height:30px;background:linear-gradient(to bottom,#1A64D0 0px,#20A0F0 1px,#18A0F0 3px,#0F90EA 10px,#0E8AE8 25px,#0B70D0 30px);border-left:1px solid #1050B0"></div>
<svg class="a" style="left:903px;top:744px" width="20" height="19" viewBox="0 0 20 19"><defs><linearGradient id="bk" x1="0" y1="0" x2="1" y2="1"><stop offset="0" stop-color="#A8D0FF"/><stop offset="0.5" stop-color="#4890F0"/><stop offset="1" stop-color="#2060D0"/></linearGradient></defs><circle cx="10" cy="9.5" r="8.6" fill="url(#bk)" stroke="#E0F0FF" stroke-width="0.8"/><path d="M11.5 5.5 L8 9.5 L11.5 13.5" stroke="#fff" stroke-width="2.4" fill="none"/></svg>
<svg class="a" style="left:925px;top:745px" width="18" height="18" viewBox="0 0 18 18"><circle cx="9" cy="9" r="7.5" fill="none" stroke="#E02020" stroke-width="2.5"/><path d="M3 11 A7 7 0 0 1 9 2" stroke="#30C030" stroke-width="2.5" fill="none"/><path d="M15 6 A7 7 0 0 1 9 16" stroke="#F0C000" stroke-width="2.5" fill="none"/></svg>
<svg class="a" style="left:943px;top:745px" width="18" height="18" viewBox="0 0 18 18"><circle cx="9" cy="9" r="8" fill="#F0A020" stroke="#804000"/><path d="M4 7H14M9 7V14" stroke="#000" stroke-width="2.5"/></svg>
<svg class="a" style="left:961px;top:745px" width="16" height="18" viewBox="0 0 16 18"><rect x="4" y="1" width="7" height="6" fill="#E0E0E0" stroke="#606060"/><rect x="2" y="7" width="11" height="8" fill="#D0D0D0" stroke="#606060"/></svg>
<div style="position:absolute;left:983px;top:747px;white-space:pre;color:#fff;line-height:13px;letter-spacing:0.3px">19:35</div>
<div style="position:absolute;left:962px;top:682px;width:38px;height:34px;background:#6E6E6E;border:1px solid #707070;box-shadow:inset 1px 1px 0 #C8C8C8,inset -1px -1px 0 #B8B8B8"></div>
<div style="position:absolute;left:966px;top:686px;width:5px;height:5px;background:#60C060;border-radius:3px"></div>
<div class="t" style="left:981px;top:685px;color:#90E890;font-size:9px;line-height:10px;letter-spacing:-0.3px">99%</div>
<svg class="a" style="left:972px;top:700px" width="16" height="12" viewBox="0 0 16 12"><path d="M0 0 L8 4 L16 0 L8 11Z" fill="#F8C840" stroke="#F0E080"/></svg>
</body></html>
